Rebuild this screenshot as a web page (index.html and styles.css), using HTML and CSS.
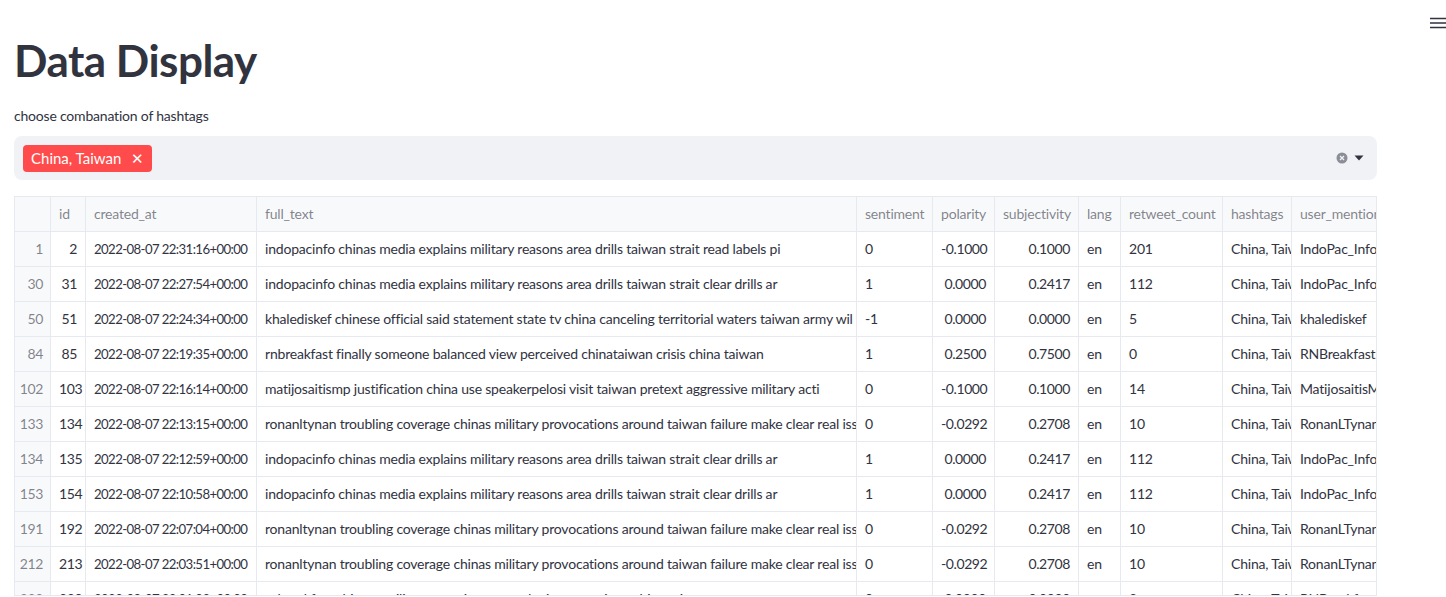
FILE: index.html
```html
<!DOCTYPE html>
<html>
<head>
<meta charset="utf-8">
<link rel="stylesheet" href="styles.css">
</head>
<body>
<button class="menu-btn" aria-label="menu">
  <svg width="16" height="12" viewBox="0 0 16 12"><path d="M0 1.5h16M0 6h16M0 10.5h16" stroke="#31333f" stroke-width="1.6"/></svg>
</button>
<main class="main">
  <h1 class="title">Data Display</h1>
  <label class="field-label">choose combanation of hashtags</label>
  <div class="multiselect">
    <div class="tags">
      <span class="tag">China, Taiwan <span class="tag-x">✕</span></span>
    </div>
    <div class="controls">
      <svg width="12" height="12" viewBox="0 0 12 12"><circle cx="6" cy="6" r="5.5" fill="#8b8e98"/><path d="M4 4l4 4M8 4l-4 4" stroke="#f0f2f6" stroke-width="1.3"/></svg>
      <svg width="10" height="6" viewBox="0 0 10 6"><path d="M0.5 0.5h9L5 5.5z" fill="#31333f"/></svg>
    </div>
  </div>
  <div class="frame">
    <div class="grid">
      <div class="row head">
        <div class="c idx"></div><div class="c w-id">id</div><div class="c w-date">created_at</div><div class="c w-text">full_text</div><div class="c w-sent">sentiment</div><div class="c w-pol">polarity</div><div class="c w-sub">subjectivity</div><div class="c w-lang">lang</div><div class="c w-rt">retweet_count</div><div class="c w-hash">hashtags</div><div class="c w-user">user_mentions</div>
      </div>
      <div class="row">
        <div class="c idx num">1</div><div class="c w-id num">2</div><div class="c w-date">2022-08-07 22:31:16+00:00</div><div class="c w-text">indopacinfo chinas media explains military reasons area drills taiwan strait read labels pi</div><div class="c w-sent">0</div><div class="c w-pol num">-0.1000</div><div class="c w-sub num">0.1000</div><div class="c w-lang">en</div><div class="c w-rt">201</div><div class="c w-hash">China, Taiwan</div><div class="c w-user">IndoPac_Info</div>
      </div>
      <div class="row">
        <div class="c idx num">30</div><div class="c w-id num">31</div><div class="c w-date">2022-08-07 22:27:54+00:00</div><div class="c w-text">indopacinfo chinas media explains military reasons area drills taiwan strait clear drills ar</div><div class="c w-sent">1</div><div class="c w-pol num">0.0000</div><div class="c w-sub num">0.2417</div><div class="c w-lang">en</div><div class="c w-rt">112</div><div class="c w-hash">China, Taiwan</div><div class="c w-user">IndoPac_Info</div>
      </div>
      <div class="row">
        <div class="c idx num">50</div><div class="c w-id num">51</div><div class="c w-date">2022-08-07 22:24:34+00:00</div><div class="c w-text">khalediskef chinese official said statement state tv china canceling territorial waters taiwan army wil</div><div class="c w-sent">-1</div><div class="c w-pol num">0.0000</div><div class="c w-sub num">0.0000</div><div class="c w-lang">en</div><div class="c w-rt">5</div><div class="c w-hash">China, Taiwan</div><div class="c w-user">khalediskef</div>
      </div>
      <div class="row">
        <div class="c idx num">84</div><div class="c w-id num">85</div><div class="c w-date">2022-08-07 22:19:35+00:00</div><div class="c w-text">rnbreakfast finally someone balanced view perceived chinataiwan crisis china taiwan</div><div class="c w-sent">1</div><div class="c w-pol num">0.2500</div><div class="c w-sub num">0.7500</div><div class="c w-lang">en</div><div class="c w-rt">0</div><div class="c w-hash">China, Taiwan</div><div class="c w-user">RNBreakfast</div>
      </div>
      <div class="row">
        <div class="c idx num">102</div><div class="c w-id num">103</div><div class="c w-date">2022-08-07 22:16:14+00:00</div><div class="c w-text">matijosaitismp justification china use speakerpelosi visit taiwan pretext aggressive military acti</div><div class="c w-sent">0</div><div class="c w-pol num">-0.1000</div><div class="c w-sub num">0.1000</div><div class="c w-lang">en</div><div class="c w-rt">14</div><div class="c w-hash">China, Taiwan</div><div class="c w-user">MatijosaitisMP</div>
      </div>
      <div class="row">
        <div class="c idx num">133</div><div class="c w-id num">134</div><div class="c w-date">2022-08-07 22:13:15+00:00</div><div class="c w-text">ronanltynan troubling coverage chinas military provocations around taiwan failure make clear real issues</div><div class="c w-sent">0</div><div class="c w-pol num">-0.0292</div><div class="c w-sub num">0.2708</div><div class="c w-lang">en</div><div class="c w-rt">10</div><div class="c w-hash">China, Taiwan</div><div class="c w-user">RonanLTynan</div>
      </div>
      <div class="row">
        <div class="c idx num">134</div><div class="c w-id num">135</div><div class="c w-date">2022-08-07 22:12:59+00:00</div><div class="c w-text">indopacinfo chinas media explains military reasons area drills taiwan strait clear drills ar</div><div class="c w-sent">1</div><div class="c w-pol num">0.0000</div><div class="c w-sub num">0.2417</div><div class="c w-lang">en</div><div class="c w-rt">112</div><div class="c w-hash">China, Taiwan</div><div class="c w-user">IndoPac_Info</div>
      </div>
      <div class="row">
        <div class="c idx num">153</div><div class="c w-id num">154</div><div class="c w-date">2022-08-07 22:10:58+00:00</div><div class="c w-text">indopacinfo chinas media explains military reasons area drills taiwan strait clear drills ar</div><div class="c w-sent">1</div><div class="c w-pol num">0.0000</div><div class="c w-sub num">0.2417</div><div class="c w-lang">en</div><div class="c w-rt">112</div><div class="c w-hash">China, Taiwan</div><div class="c w-user">IndoPac_Info</div>
      </div>
      <div class="row">
        <div class="c idx num">191</div><div class="c w-id num">192</div><div class="c w-date">2022-08-07 22:07:04+00:00</div><div class="c w-text">ronanltynan troubling coverage chinas military provocations around taiwan failure make clear real issues</div><div class="c w-sent">0</div><div class="c w-pol num">-0.0292</div><div class="c w-sub num">0.2708</div><div class="c w-lang">en</div><div class="c w-rt">10</div><div class="c w-hash">China, Taiwan</div><div class="c w-user">RonanLTynan</div>
      </div>
      <div class="row">
        <div class="c idx num">212</div><div class="c w-id num">213</div><div class="c w-date">2022-08-07 22:03:51+00:00</div><div class="c w-text">ronanltynan troubling coverage chinas military provocations around taiwan failure make clear real issues</div><div class="c w-sent">0</div><div class="c w-pol num">-0.0292</div><div class="c w-sub num">0.2708</div><div class="c w-lang">en</div><div class="c w-rt">10</div><div class="c w-hash">China, Taiwan</div><div class="c w-user">RonanLTynan</div>
      </div>
      <div class="row">
        <div class="c idx num">238</div><div class="c w-id num">239</div><div class="c w-date">2022-08-07 22:01:02+00:00</div><div class="c w-text">rnbreakfast chinese military exercises around taiwan continue china taiwan</div><div class="c w-sent">0</div><div class="c w-pol num">0.0000</div><div class="c w-sub num">0.0000</div><div class="c w-lang">en</div><div class="c w-rt">3</div><div class="c w-hash">China, Taiwan</div><div class="c w-user">RNBreakfast</div>
      </div>
    </div>
  </div>
</main>
</body>
</html>
```

FILE: styles.css
```css
* { box-sizing: border-box; }
html, body { margin: 0; padding: 0; background: #ffffff; }
body {
  font-family: "Lato", "Noto Sans", sans-serif;
  color: #31333f;
  font-size: 14px;
  letter-spacing: -0.2px;
}
.menu-btn {
  position: absolute;
  top: 16px;
  right: 0;
  width: 16px;
  height: 14px;
  padding: 0;
  border: 0;
  background: transparent;
  display: flex;
  align-items: center;
}
.main {
  width: 1363px;
  margin-left: 14px;
  display: flex;
  flex-direction: column;
}
.title {
  margin: 0;
  padding-top: 34px;
  font-size: 44px;
  line-height: 53px;
  font-weight: 700;
  letter-spacing: -0.5px;
}
.field-label {
  margin-top: 18px;
  height: 21px;
  line-height: 21px;
  font-size: 14px;
}
.multiselect {
  margin-top: 10px;
  height: 44px;
  background: #f0f2f6;
  border-radius: 8px;
  display: flex;
  align-items: center;
  justify-content: space-between;
  padding: 0 13px 0 9px;
}
.tag {
  display: inline-flex;
  align-items: center;
  height: 27px;
  padding: 0 8px 0 8px;
  background: #ff4b4b;
  color: #ffffff;
  border-radius: 4px;
  font-size: 15px;
  letter-spacing: 0;
  gap: 10px;
}
.tag-x { font-size: 15px; line-height: 1; }
.controls {
  display: flex;
  align-items: center;
  gap: 6px;
}
.frame {
  margin-top: 16px;
  height: 400px;
  border: 1px solid #e6e9ef;
  overflow: hidden;
}
.grid { display: flex; flex-direction: column; }
.row {
  display: flex;
  height: 35px;
  border-bottom: 1px solid #e6e9ef;
  flex: none;
}
.head { background: #f8f9fb; }
.head .c { color: rgba(49, 51, 63, 0.6); }
.c {
  flex: none;
  height: 34px;
  line-height: 34px;
  padding: 0 8px;
  white-space: nowrap;
  overflow: hidden;
  border-right: 1px solid #e6e9ef;
}
.num { text-align: right; letter-spacing: -0.4px; }
.idx { width: 36px; color: rgba(49, 51, 63, 0.6); background: #f8f9fb; padding: 0 7px 0 4px; }
.w-id { width: 35px; }
.w-date { width: 171px; font-size: 13.2px; letter-spacing: -0.6px; }
.head .w-date { font-size: 14px; letter-spacing: -0.2px; }
.w-text { width: 600px; }
.w-sent { width: 76px; }
.w-pol { width: 62px; }
.w-sub { width: 84px; }
.w-lang { width: 42px; }
.w-rt { width: 102px; }
.w-hash { width: 69px; }
.w-user { width: 110px; }
```
